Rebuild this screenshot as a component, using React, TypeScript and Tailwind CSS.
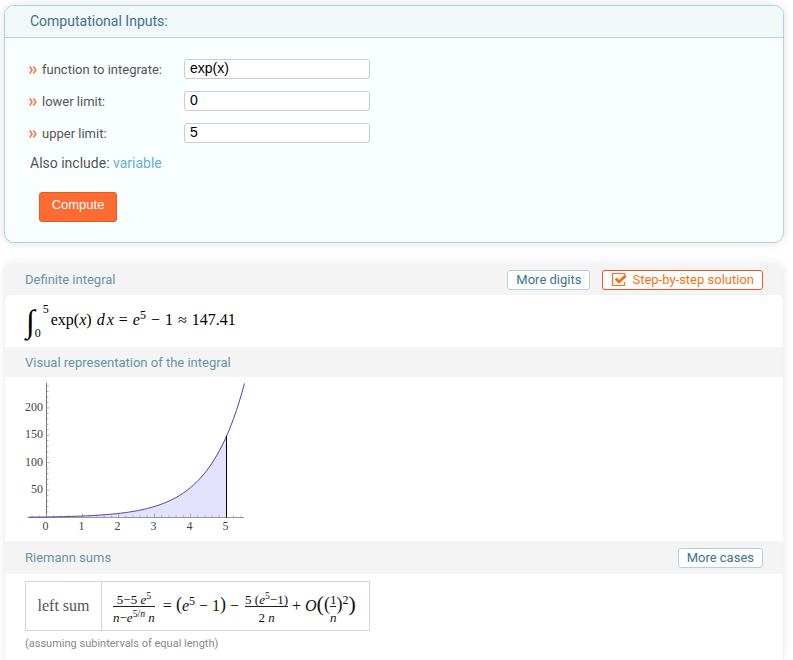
import React from "react";

const serif = "font-['Liberation_Serif',serif]";

function InputRow({ id, label, value }: { id: string; label: string; value: string }) {
  return (
    <div className="flex h-5 items-center">
      <label htmlFor={id} className="flex w-[155px] items-center pt-px text-[13px] leading-5 text-[#555]">
        <svg viewBox="0 0 8 8" className="mr-[5px] h-2 w-2" fill="none" stroke="#fa6b32" strokeWidth="1.4" aria-hidden="true">
          <path d="M0.7 0.4 3.2 4 0.7 7.6M4.4 0.4 6.9 4 4.4 7.6" />
        </svg>
        {label}
      </label>
      <input
        id={id}
        defaultValue={value}
        className="h-5 w-[186px] rounded-[3px] border border-[#ccc] bg-white px-[5px] pb-[2px] font-['Liberation_Sans',sans-serif] text-sm leading-4 text-black outline-none"
      />
    </div>
  );
}

function PodHeader({ title, className, children }: { title: string; className: string; children?: React.ReactNode }) {
  return (
    <header className={`flex items-center justify-between bg-[#f4f4f4] pl-5 pr-5 ${className}`}>
      <h2 className="text-[13px] leading-5 text-[#6694a8]">{title}</h2>
      <div className="flex gap-3">{children}</div>
    </header>
  );
}

function PodButton({ children }: { children: React.ReactNode }) {
  return (
    <button className="h-5 rounded-[3px] border border-[#afd3df] bg-white px-2 text-[13px] leading-4 text-[#3c7391]">
      {children}
    </button>
  );
}

function Fraction({ top, bottom }: { top: React.ReactNode; bottom: React.ReactNode }) {
  return (
    <span className="flex flex-col items-center text-[13px]">
      <span className="w-full whitespace-nowrap border-b border-[#222] pt-[6px] text-center leading-3">{top}</span>
      <span className="whitespace-nowrap pt-1 leading-[14px]">{bottom}</span>
    </span>
  );
}

const left = 46.5;
const base = 135.5;
const px = (x: number) => left - 24 + x * 36;
const py = (y: number) => base - y * 0.548;
const samples = (from: number, to: number) => {
  const points: string[] = [];
  for (let i = 0; i <= 80; i++) {
    const x = from + ((to - from) * i) / 80;
    points.push(`${px(x).toFixed(2)},${py(Math.exp(x)).toFixed(2)}`);
  }
  return points.join(" ");
};

function Plot() {
  const xTicks = Array.from({ length: 30 }, (_, i) => i - 2).filter((i) => i <= 27);
  const yTicks = Array.from({ length: 24 }, (_, i) => i + 1);
  return (
    <svg width="222" height="152" viewBox="0 0 222 152" role="img" aria-label="Plot of exp(x), shaded from 0 to 5">
      <polygon points={`${px(0)},${base} ${samples(0, 5)} ${px(5)},${base}`} fill="#e3e2ff" />
      <g stroke="#999" strokeWidth="1">
        <path d={`M4 ${base}H220`} />
        <path d={`M${px(0)} 1V${base}`} stroke="#777" />
        {xTicks.map((i) => (
          <path key={i} d={`M${px(i / 5)} ${base}v${i % 5 === 0 ? -4 : -2}`} strokeWidth="0.8" />
        ))}
        {yTicks.map((i) => (
          <path key={i} d={`M${px(0)} ${py(i * 10)}h${i % 5 === 0 ? 3 : 2}`} strokeWidth="0.8" />
        ))}
      </g>
      <polyline points={samples(-0.5, 5.5)} fill="none" stroke="#4a46a5" strokeWidth="1" />
      <path d={`M${px(5)} ${py(Math.exp(5))}V${base}`} stroke="#000" strokeWidth="1" />
      <g fill="#444" className={`${serif} text-xs`}>
        {[50, 100, 150, 200].map((v) => (
          <text key={v} x="19" y={py(v) + 3} textAnchor="end">{v}</text>
        ))}
        {[0, 1, 2, 3, 4, 5].map((v) => (
          <text key={v} x={px(v) - 1} y="148" textAnchor="middle">{v}</text>
        ))}
      </g>
    </svg>
  );
}

export default function App() {
  return (
    <div className="flex min-h-screen flex-col overflow-hidden bg-white pl-1 pr-[9px] pt-[5px] font-[Roboto,sans-serif]">
      <section className="rounded-[10px] border border-[#b1d2de] bg-[#f9ffff] pb-5 shadow-[0_0_10px_rgba(0,0,0,0.12)]">
        <h1 className="h-8 rounded-t-[9px] border-b border-[#b1d2de] bg-[#f2f7f7] pl-[25px] text-sm leading-[30px] text-[#3c7391]">
          Computational Inputs:
        </h1>
        <form className="pl-6 pt-[21px]" onSubmit={(e) => e.preventDefault()}>
          <div className="flex flex-col gap-3">
            <InputRow id="fn" label="function to integrate:" value="exp(x)" />
            <InputRow id="lower" label="lower limit:" value="0" />
            <InputRow id="upper" label="upper limit:" value="5" />
          </div>
          <p className="mt-[10px] pl-px text-sm leading-5 text-[#555]">
            Also include: <a href="#variable" className="text-[#69b0d5]">variable</a>
          </p>
          <button className="ml-[10px] mt-[19px] block h-[30px] w-[78px] rounded-[3px] border border-[#f0561d] bg-[#fb6b33] pb-1 font-['Liberation_Sans',sans-serif] text-[13px] leading-5 text-white">
            Compute
          </button>
        </form>
      </section>

      <main className="mt-5 flex-1 rounded-t-lg border-x border-[#f2f2f2] bg-white shadow-[0_0_10px_rgba(0,0,0,0.08)]">
        <section className="overflow-hidden rounded-t-lg bg-[#f4f4f4]">
          <PodHeader title="Definite integral" className="h-8 pt-px">
            <PodButton>More digits</PodButton>
            <button className="flex h-5 items-center rounded-[3px] border border-[#f0561d] bg-white px-2 text-[13px] leading-4 text-[#fa7114]">
              <svg viewBox="0 0 16 16" className="mr-[5px] h-4 w-4" fill="none" aria-hidden="true">
                <path d="M13.5 3V1.5h-12v12h12V10" stroke="#fa7114" strokeWidth="1.2" />
                <path d="M4.7 6.6 8 9.8 14.8 3.6" stroke="#fa7114" strokeWidth="2.8" />
              </svg>
              Step-by-step solution
            </button>
          </PodHeader>
          <div className={`flex h-[52px] items-center rounded-t-md bg-white pl-[21px] text-base leading-5 text-black ${serif}`}>
            <span className="text-[32px] leading-9">∫</span>
            <span className="flex h-9 w-4 flex-col justify-between text-xs leading-3">
              <span className="pl-2">5</span>
              <span>0</span>
            </span>
            <span className="flex gap-[5px] pb-[2px]">
              <span>exp(<i>x</i>)</span>
              <span className="flex gap-[2px]"><i>d</i><i>x</i></span>
              <span>=</span>
              <span><i>e</i><sup>5</sup></span>
              <span>−</span>
              <span>1</span>
              <span>≈</span>
              <span>147.41</span>
            </span>
          </div>
        </section>

        <section>
          <PodHeader title="Visual representation of the integral" className="h-[30px] pt-[2px]" />
          <div className="h-[164px] bg-white pl-[19px] pt-[5px]">
            <Plot />
          </div>
        </section>

        <section>
          <PodHeader title="Riemann sums" className="h-[33px] pt-px">
            <PodButton>More cases</PodButton>
          </PodHeader>
          <div className="bg-white pl-5 pt-[7px]">
            <table className={`border-collapse text-base leading-5 ${serif}`}>
              <tbody>
                <tr>
                  <th scope="row" className="h-[49px] w-[76px] border border-[#d5d5d5] p-0 text-center font-normal text-[#555]">
                    left sum
                  </th>
                  <td className="w-[268px] border border-[#d5d5d5] p-0 text-[#111]">
                    <div className="flex items-center pl-[11px]">
                      <Fraction
                        top={<>5−5 <i>e</i><sup>5</sup></>}
                        bottom={<><i>n</i>−<i>e</i><sup>5/<i>n</i></sup> <i>n</i></>}
                      />
                      <span className="flex items-center gap-1 pl-2 pr-[6px]">
                        <span>=</span>
                        <span className="flex items-center">
                          <span className="pb-1 text-lg leading-5">(</span>
                          <span><i>e</i><sup>5</sup> − 1</span>
                          <span className="pb-1 text-lg leading-5">)</span>
                        </span>
                        <span>−</span>
                      </span>
                      <Fraction
                        top={<>5 (<i>e</i><sup>5</sup>−1)</>}
                        bottom={<>2 <i>n</i></>}
                      />
                      <span className="pl-1">+ <i>O</i></span>
                      <span className="pb-1 text-[22px] leading-6">(</span>
                      <span className="pb-1 text-lg leading-6">(</span>
                      <Fraction top="1" bottom={<i>n</i>} />
                      <span className="pb-1 text-lg leading-6">)</span>
                      <span className="pb-3 text-xs leading-3">2</span>
                      <span className="pb-1 text-[22px] leading-6">)</span>
                    </div>
                  </td>
                </tr>
              </tbody>
            </table>
            <p className="mt-[5px] text-[11px] leading-4 text-[#888]">(assuming subintervals of equal length)</p>
          </div>
        </section>
      </main>
    </div>
  );
}
